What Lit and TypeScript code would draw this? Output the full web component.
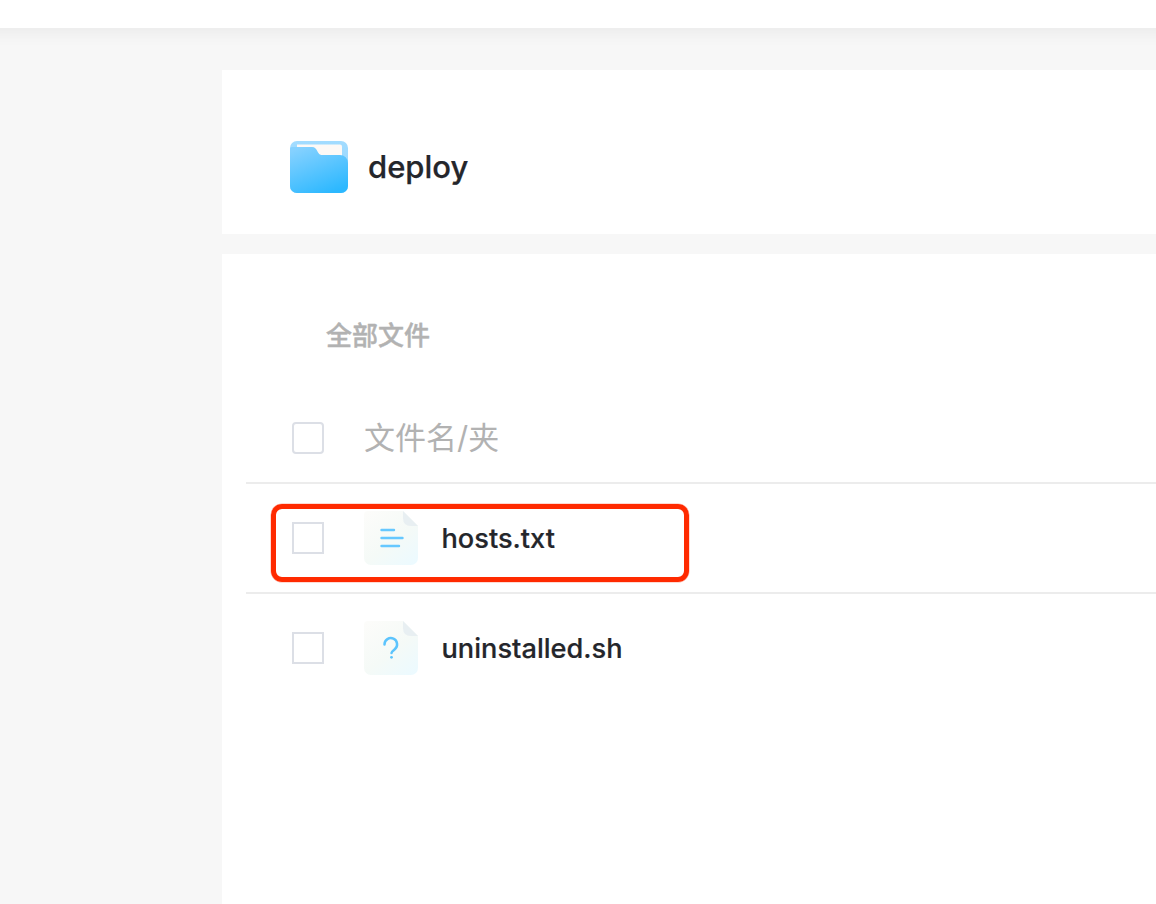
import { LitElement, html, css, svg } from "lit";
import { customElement } from "lit/decorators.js";

const defs = (id: string) => svg`
  <defs>
    <linearGradient id=${id} x1="0.1" y1="0" x2="0.9" y2="1">
      <stop offset="0" stop-color="#fcfcfa"/>
      <stop offset="0.55" stop-color="#f5faf7"/>
      <stop offset="1" stop-color="#ecfaff"/>
    </linearGradient>
  </defs>`;

const sheet = (id: string) => svg`
  ${defs(id)}
  <path d="M4 0H39L54 15V47a7 7 0 0 1-7 7H7a7 7 0 0 1-7-7V4a4 4 0 0 1 4-4Z" fill="url(#${id})"/>
  <path d="M39 0L54 15H47Q39 15 39 7Z" fill="#e8eff2"/>`;

const textIcon = html`<svg class="ficon" width="54" height="54" viewBox="0 0 54 54">
  ${sheet("g1")}
  <path d="M17.500 19H30M17.500 27H38.500M17.500 35H35" fill="none" stroke="#66c8ff" stroke-width="2.4" stroke-linecap="round"/>
</svg>`;

const unknownIcon = html`<svg class="ficon" width="54" height="54" viewBox="0 0 54 54">
  ${sheet("g2")}
  <path d="M20.500 23.500a6.300 6.300 0 1 1 10.300 4.800c-2 1.600-3.300 2.400-3.300 3.700" fill="none" stroke="#5cc4fd" stroke-width="2.500" stroke-linecap="round"/>
  <circle cx="27.500" cy="36.300" r="1.400" fill="#5cc4fd"/>
</svg>`;

const folderIcon = html`<svg width="58" height="52" viewBox="0 0 58 52">
  <defs>
    <linearGradient id="fb" x1="0" y1="0" x2="0" y2="1">
      <stop offset="0" stop-color="#a3dcff"/><stop offset="1" stop-color="#8fd5ff"/>
    </linearGradient>
    <linearGradient id="ff" x1="0.2" y1="0" x2="0.7" y2="1">
      <stop offset="0" stop-color="#85d1ff"/><stop offset="1" stop-color="#2cb8ff"/>
    </linearGradient>
  </defs>
  <rect width="58" height="52" rx="7" fill="url(#fb)"/>
  <path d="M7 3.500H50a2 2 0 0 1 2 2V16H7Z" fill="#fdf9f6"/>
  <path d="M0 8a2 2 0 0 1 2-2H22c3 0 4 1.500 5.500 4.500s3 3.500 6 3.500H50a8 8 0 0 1 8 8V45a7 7 0 0 1-7 7H7a7 7 0 0 1-7-7Z" fill="url(#ff)"/>
</svg>`;

@customElement("app-root")
export class AppRoot extends LitElement {
  static styles = css`
    :host {
      display: block;
      height: 904px;
      overflow: hidden;
      position: relative;
      background: #f7f7f7;
      font-family: Inter, "Noto Sans CJK SC", sans-serif;
      color: #24262b;
    }
    .topbar {
      height: 28px;
      margin: 0 -40px;
      background: #fff;
      box-shadow: 0 4px 18px rgba(0, 0, 0, 0.06);
    }
    .main {
      margin: 42px 0 0 222px;
      display: flex;
      flex-direction: column;
      gap: 20px;
    }
    .head {
      height: 164px;
      box-sizing: border-box;
      background: #fff;
      display: flex;
      align-items: center;
      gap: 20px;
      padding: 30px 0 0 68px;
    }
    .head svg { display: block; }
    .title {
      font-size: 31px;
      font-weight: 500;
      line-height: 36px;
      -webkit-text-stroke: 0.25px #24262b;
    }
    .panel {
      height: 650px;
      background: #fff;
      padding-left: 24px;
    }
    .crumb {
      padding: 66px 0 0 80px;
      box-sizing: border-box;
      height: 124px;
      font-size: 26px;
      line-height: 32px;
      font-weight: 500;
      color: #b2b2b2;
      -webkit-text-stroke: 0.4px #b2b2b2;
    }
    .row {
      height: 110px;
      box-sizing: border-box;
      border-bottom: 2px solid #ececec;
      display: flex;
      align-items: center;
      padding-left: 46px;
    }
    .row.hd {
      height: 106px;
      padding-top: 16px;
    }
    .row:last-child { border-bottom-color: transparent; }
    .check {
      width: 32px;
      height: 32px;
      box-sizing: border-box;
      border: 2px solid #dcdfe6;
      background: #fff;
      margin-right: 40px;
      flex: none;
    }
    .hd .check { border-radius: 4px; }
    .colname {
      font-size: 31px;
      line-height: 40px;
      color: #b2b2b2;
    }
    .ficon { display: block; flex: none; margin-right: 23.500px; }
    .name {
      font-size: 27.200px;
      font-weight: 500;
      line-height: 36px;
      padding-top: 1px;
      -webkit-text-stroke: 0.2px #24262b;
    }
    .mark {
      position: absolute;
      left: 271px;
      top: 504px;
      width: 418px;
      height: 78px;
      box-sizing: border-box;
      border: 5px solid #ff2a00;
      border-radius: 11px;
      box-shadow: 0 0 0 0.5px rgba(255, 42, 0, 0.35);
      pointer-events: none;
    }
  `;

  render() {
    return html`
      <div class="topbar"></div>
      <div class="main">
        <section class="head">
          ${folderIcon}
          <span class="title">deploy</span>
        </section>
        <section class="panel">
          <div class="crumb">全部文件</div>
          <div class="row hd">
            <span class="check"></span>
            <span class="colname">文件名/夹</span>
          </div>
          <div class="row">
            <span class="check"></span>
            ${textIcon}
            <span class="name">hosts.txt</span>
          </div>
          <div class="row">
            <span class="check"></span>
            ${unknownIcon}
            <span class="name">uninstalled.sh</span>
          </div>
        </section>
      </div>
      <div class="mark"></div>
    `;
  }
}
